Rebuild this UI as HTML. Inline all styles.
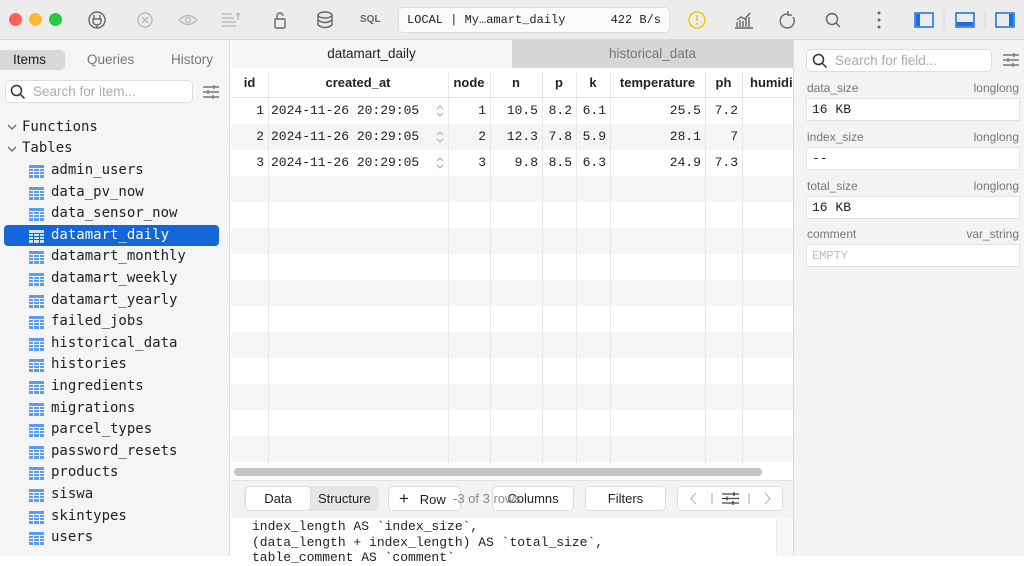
<!DOCTYPE html>
<html><head><meta charset="utf-8"><style>
*{box-sizing:border-box;margin:0;padding:0}
body{width:1024px;height:556px;overflow:hidden;font-family:"Liberation Sans",sans-serif;background:#fff;position:relative;font-size:13px;color:#222}
.a{position:absolute}
.mono{font-family:"Liberation Mono","DejaVu Sans Mono",monospace}
.tb{left:0;top:0;width:1024px;height:40px;background:#ececec;border-bottom:1px solid #d8d8d8}
.side{left:0;top:40px;width:230px;height:516px;background:#f5f5f5;border-right:1px solid #ddd}
.right{left:793px;top:40px;width:231px;height:516px;background:#f3f3f3;border-left:1px solid #ddd}
.item{position:absolute;left:30px;font-size:14px;color:#222}
.ic{position:absolute;left:-1px;top:3px;width:15px;height:13px}
.lbl{position:absolute;left:807px;width:212px;font-size:12px;color:#777}
.lbl span{float:right}
.box{position:absolute;left:806px;width:214px;height:23px;background:#fff;border:1px solid #e2e2e2;font-size:13px;line-height:22px;padding-left:5px}
.btn{position:absolute;top:486px;height:25px;background:#fff;border:1px solid #ddd;border-radius:5px;font-size:13px;line-height:23px;text-align:center;color:#222}
</style></head><body>
<div class="a tb"></div>
<div class="a" style="left:9px;top:13px;width:13px;height:13px;border-radius:50%;background:#fe5f57"></div>
<div class="a" style="left:29px;top:13px;width:13px;height:13px;border-radius:50%;background:#febc2e"></div>
<div class="a" style="left:49px;top:13px;width:13px;height:13px;border-radius:50%;background:#28c840"></div>
<svg class="a" style="left:0;top:0" width="400" height="40" fill="none" stroke="#666" stroke-width="1.4">
<circle cx="97" cy="20" r="8"/><path d="M94 15v4M100 15v4M93 19h8v2a4 4 0 0 1-8 0zM97 25v3"/>
<g stroke="#bbb"><circle cx="145" cy="20" r="7"/><path d="M142 17l6 6M148 17l-6 6"/>
<path d="M179 20q9-9 18 0q-9 9-18 0z"/><circle cx="188" cy="20" r="2.5"/>
<path d="M222 14h10M222 18h12M222 22h14M222 26h14M238 20v-7M236 15l2-2 2 2"/></g>
<rect x="275" y="19" width="10" height="9" rx="1"/><path d="M277 19v-3a3 3 0 0 1 6 0"/>
<ellipse cx="325" cy="15" rx="7" ry="3"/><path d="M318 15v10q7 5 14 0V15M318 20q7 5 14 0"/>
</svg>
<div class="a" style="left:360px;top:14px;font-size:10px;font-weight:bold;color:#666">SQL</div>
<div class="a mono" style="left:398px;top:7px;width:272px;height:26px;background:#fafafa;border:1px solid #ddd;border-radius:5px;font-size:12px;line-height:24px;padding:0 8px">LOCAL | My…amart_daily<span style="float:right">422 B/s</span></div>
<svg class="a" style="left:680px;top:0" width="344" height="40" fill="none" stroke="#666" stroke-width="1.4">
<circle cx="17" cy="20" r="8" stroke="#f5c518" stroke-width="1.6"/><path d="M17 15v6M17 23v1.5" stroke="#f5c518" stroke-width="1.6"/>
<path d="M55 28h18M57 27v-5M60 27v-7M63 27v-6M66 27v-8M69 27v-10M57 20l4-3 4 2 5-6"/>
<path d="M108 14a7 7 0 1 0 5 3M108 11v4h4"/>
<circle cx="152" cy="19" r="5.5"/><path d="M156 23l4 4"/>
<g fill="#666" stroke="none"><circle cx="199" cy="13" r="1.5"/><circle cx="199" cy="20" r="1.5"/><circle cx="199" cy="27" r="1.5"/></g>
<g stroke="#1a6fe0" stroke-width="1.5"><rect x="235" y="13" width="18" height="14"/><rect x="276" y="13" width="18" height="14"/><rect x="316" y="13" width="18" height="14"/></g>
<g fill="#1a6fe0" stroke="none"><rect x="236" y="14" width="4" height="12"/><rect x="277" y="22" width="16" height="4"/><rect x="329" y="14" width="4" height="12"/></g>
<path d="M264 12v16M305 12v16" stroke="#ddd"/>
</svg>

<div class="a side"></div>
<div class="a" style="left:0;top:50px;width:65px;height:20px;background:#d8d8d8;border-radius:0 5px 5px 0;font-size:13.5px;line-height:20px;padding-left:13px">Items</div>
<div class="a" style="left:87px;top:52px;font-size:13.5px;color:#777">Queries</div>
<div class="a" style="left:171px;top:52px;font-size:13.5px;color:#777">History</div>
<div class="a" style="left:5px;top:80px;width:188px;height:23px;background:#fff;border:1px solid #ddd;border-radius:5px"></div>
<svg class="a" style="left:10px;top:84px" width="16" height="16" fill="none" stroke="#333" stroke-width="1.5"><circle cx="6.5" cy="6.5" r="5"/><path d="M10 10l4.5 4.5"/></svg>
<div class="a" style="left:33px;top:84px;font-size:13.5px;color:#aaa">Search for item...</div>
<svg class="a" style="left:202px;top:84px" width="18" height="16" stroke="#777" stroke-width="1.4"><path d="M1 3h16M1 8h16M1 13h16M12 1v4M6 6v4M11 11v4"/></svg>
<svg class="a" style="left:6px;top:122px" width="14" height="40" fill="none" stroke="#666" stroke-width="1.3"><path d="M2 3l4 4 4-4M2 25l4 4 4-4"/></svg>
<div class="a" style="left:22px;top:119px;font-size:14px;font-family:'DejaVu Sans Mono',monospace">Functions</div>
<div class="a" style="left:22px;top:140px;font-size:14px;font-family:'DejaVu Sans Mono',monospace">Tables</div>
<div class="a" style="left:4px;top:225px;width:215px;height:21px;background:#1467d8;border-radius:4px"></div>
<div id="list" style="font-family:'DejaVu Sans Mono',monospace"></div>
<script>
var n=["admin_users","data_pv_now","data_sensor_now","datamart_daily","datamart_monthly","datamart_weekly","datamart_yearly","failed_jobs","historical_data","histories","ingredients","migrations","parcel_types","password_resets","products","siswa","skintypes","users"];
var h="";for(var i=0;i<n.length;i++){var y=162+21.6*i;var sel=n[i]=="datamart_daily";var c=sel?"#cfe0fb":"#5a9cf0";
h+='<div class="item" style="top:'+y+'px;'+(sel?'color:#fff':'')+'"><svg class="ic" viewBox="0 0 15 13"><path fill="'+c+'" d="M0 0h15v3H0zM0 4h4v2H0zM5 4h5v2H5zM11 4h4v2h-4zM0 7h4v2H0zM5 7h5v2H5zM11 7h4v2h-4zM0 10h4v3H0zM5 10h5v3H5zM11 10h4v3h-4z"/></svg><span style="padding-left:21px">'+n[i]+'</span></div>';}
document.getElementById("list").innerHTML=h;
</script>

<div class="a" style="left:231px;top:40px;width:281px;height:28px;background:#f6f6f6;text-align:center;line-height:28px;font-size:13.5px">datamart_daily</div>
<div class="a" style="left:512px;top:40px;width:281px;height:28px;background:#d6d6d6;text-align:center;line-height:28px;font-size:13.5px;color:#777">historical_data</div>
<div id="grid"></div>
<script>
var cols=[231,268,448,490,542,576,610,705,742,793];
var g="";
for(var r=0;r<14;r++){var y=98+26*r;if(r%2==1)g+='<div class="a" style="left:231px;top:'+y+'px;width:562px;height:26px;background:#f4f5f5"></div>';}
for(var i=1;i<cols.length-1;i++)g+='<div class="a" style="left:'+cols[i]+'px;top:72px;width:1px;height:392px;background:#e8e8e8"></div>';
var hd=["id","created_at","node","n","p","k","temperature","ph","humidi"];
for(var i=0;i<hd.length;i++)g+='<div class="a" style="left:'+cols[i]+'px;top:68px;width:'+(cols[i+1]-cols[i])+'px;height:30px;font-weight:bold;font-size:13px;line-height:30px;text-align:'+(i==8?'left;padding-left:8px':'center')+';overflow:hidden;white-space:nowrap">'+hd[i]+'</div>';
var d=[["1","2024-11-26 20:29:05","1","10.5","8.2","6.1","25.5","7.2"],["2","2024-11-26 20:29:05","2","12.3","7.8","5.9","28.1","7"],["3","2024-11-26 20:29:05","3","9.8","8.5","6.3","24.9","7.3"]];
for(var r=0;r<3;r++)for(var i=0;i<8;i++){var y=98+26*r;
if(i==1)g+='<div class="a mono" style="left:271px;top:'+y+'px;font-size:13px;line-height:26px">'+d[r][i]+'</div><svg class="a" style="left:435px;top:'+(y+5)+'px" width="10" height="16" fill="none" stroke="#aaa" stroke-width="1.1"><path d="M2 6l3-3 3 3M2 10l3 3 3-3"/></svg>';
else g+='<div class="a mono" style="left:'+cols[i]+'px;top:'+y+'px;width:'+(cols[i+1]-cols[i]-4)+'px;font-size:13px;line-height:26px;text-align:right">'+d[r][i]+'</div>';}
document.getElementById("grid").innerHTML=g;
</script>
<div class="a" style="left:231px;top:97px;width:562px;height:1px;background:#e4e4e4"></div>
<div class="a" style="left:234px;top:468px;width:528px;height:8px;background:#c4c4c4;border-radius:4px"></div>
<div class="a" style="left:231px;top:480px;width:562px;height:38px;background:#f3f3f3;border-top:1px solid #e2e2e2"></div>
<div class="a" style="left:244px;top:486px;width:135px;height:25px;background:#e6e6e6;border-radius:6px"></div>
<div class="btn" style="left:245px;width:66px">Data</div>
<div class="a" style="left:318px;top:491px;font-size:13px">Structure</div>
<div class="btn" style="left:388px;width:73px;text-align:left;padding-left:10px"><span style="font-size:17px">+</span>&nbsp;&nbsp;&nbsp;Row</div>
<div class="btn" style="left:492px;width:82px">Columns</div>
<div class="a" style="left:453px;top:491px;font-size:13px;color:#888">-3 of 3 rows</div>
<div class="btn" style="left:585px;width:81px">Filters</div>
<div class="btn" style="left:677px;width:106px"></div>
<svg class="a" style="left:677px;top:486px" width="106" height="25" fill="none" stroke="#bbb" stroke-width="1.3"><path d="M19 7l-5 5.5 5 5.5M88 7l5 5.5-5 5.5M35 7v11M72 7v11"/><path d="M45 8h17M45 12.5h17M45 17h17M57 6v4M50 10.5v4M56 15v4" stroke="#444"/></svg>
<div class="a" style="left:231px;top:518px;width:562px;height:38px;background:#fff"></div>
<div class="a mono" style="left:252px;top:519px;font-size:13px;line-height:15.5px;white-space:pre">index_length AS `index_size`,
(data_length + index_length) AS `total_size`,
table_comment AS `comment`</div>
<div class="a" style="left:776px;top:518px;width:17px;height:38px;background:#f8f8f8;border-left:1px solid #eee"></div>

<div class="a right"></div>
<div class="a" style="left:806px;top:49px;width:186px;height:23px;background:#fff;border:1px solid #ddd;border-radius:5px"></div>
<svg class="a" style="left:812px;top:53px" width="16" height="16" fill="none" stroke="#333" stroke-width="1.5"><circle cx="6.5" cy="6.5" r="5"/><path d="M10 10l4.5 4.5"/></svg>
<div class="a" style="left:835px;top:53px;font-size:13.5px;color:#aaa">Search for field...</div>
<svg class="a" style="left:1002px;top:52px" width="18" height="16" stroke="#777" stroke-width="1.4"><path d="M1 3h16M1 8h16M1 13h16M12 1v4M6 6v4M11 11v4"/></svg>
<div class="lbl" style="top:81px">data_size<span>longlong</span></div>
<div class="box mono" style="top:98px">16 KB</div>
<div class="lbl" style="top:130px">index_size<span>longlong</span></div>
<div class="box mono" style="top:147px">--</div>
<div class="lbl" style="top:179px">total_size<span>longlong</span></div>
<div class="box mono" style="top:196px">16 KB</div>
<div class="lbl" style="top:227px">comment<span>var_string</span></div>
<div class="box mono" style="top:244px;color:#bbb;font-size:12px">EMPTY</div>
</body></html>
